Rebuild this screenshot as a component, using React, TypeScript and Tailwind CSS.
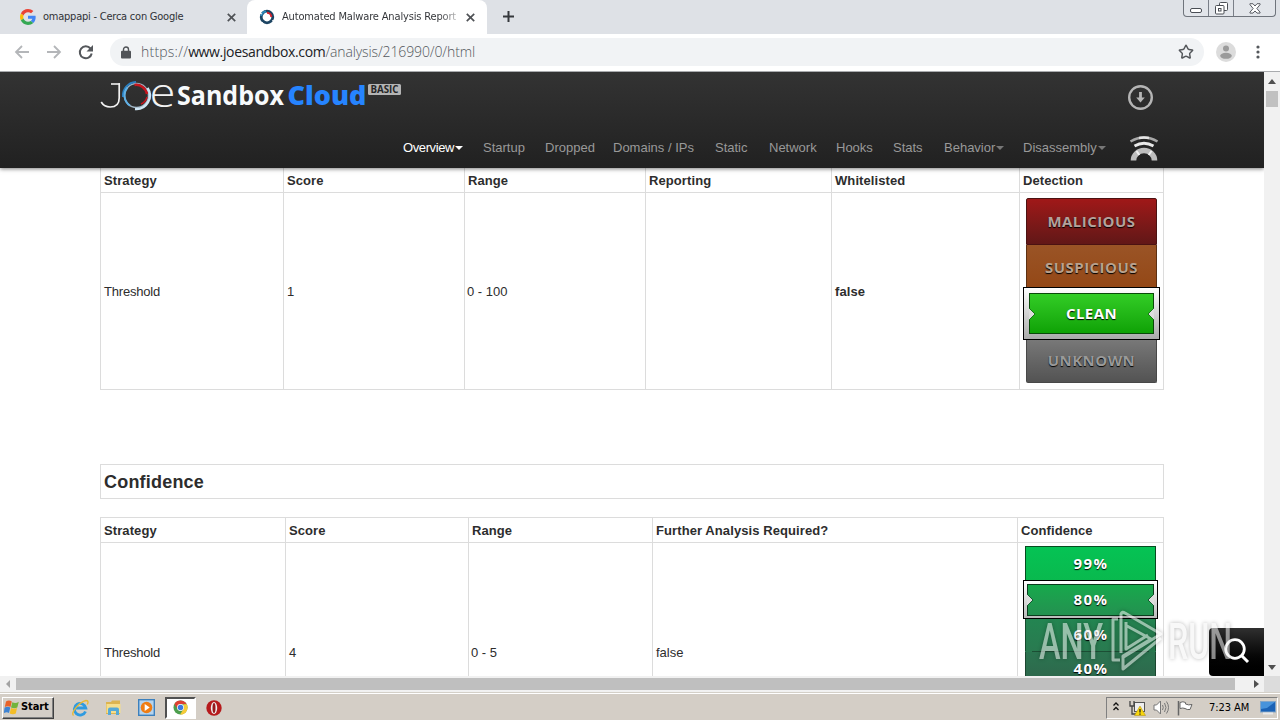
import type { ReactNode } from 'react';
import { clsx } from 'clsx';
import { Star } from 'lucide-react';

const navItems = [
  { label: 'Overview', width: 'w-[80px]', caret: true, active: true },
  { label: 'Startup', width: 'w-[62px]' },
  { label: 'Dropped', width: 'w-[68px]' },
  { label: 'Domains / IPs', width: 'w-[102px]' },
  { label: 'Static', width: 'w-[54px]' },
  { label: 'Network', width: 'w-[67px]' },
  { label: 'Hooks', width: 'w-[57px]' },
  { label: 'Stats', width: 'w-[51px]' },
  { label: 'Behavior', width: 'w-[79px]', caret: true },
  { label: 'Disassembly', width: 'w-[107px]', caret: true },
];

function GoogleIcon() {
  return (
    <svg width="16" height="16" viewBox="0 0 48 48">
      <path fill="#EA4335" d="M24 9.5c3.500 0 6.700 1.200 9.200 3.600l6.900-6.900C35.900 2.400 30.500 0 24 0 14.600 0 6.500 5.400 2.600 13.200l8 6.200C12.400 13.700 17.700 9.500 24 9.500z" />
      <path fill="#4285F4" d="M47 24.600c0-1.600-.2-3.100-.4-4.600H24v9h12.900c-.6 3-2.300 5.500-4.800 7.200l7.700 6C44.400 38 47 32 47 24.600z" />
      <path fill="#FBBC05" d="M10.500 28.600c-.5-1.500-.8-3-.8-4.600s.3-3.100.8-4.600l-8-6.200C.9 16.500 0 20.100 0 24s.9 7.500 2.600 10.800l7.900-6.200z" />
      <path fill="#34A853" d="M24 48c6.500 0 11.900-2.100 15.900-5.800l-7.700-6c-2.200 1.500-4.900 2.300-8.200 2.300-6.300 0-11.600-4.200-13.500-9.900l-8 6.200C6.500 42.600 14.600 48 24 48z" />
    </svg>
  );
}

function JoeIcon() {
  return (
    <svg width="16" height="16" viewBox="0 0 16 16" fill="none">
      <circle cx="8" cy="8" r="5.800" stroke="#1d4563" strokeWidth="2.800" />
      <path d="M2.200 7A6 6 0 0 1 7 2.200" stroke="#2b86b8" strokeWidth="2" />
      <path d="M8 3.800A4.300 4.300 0 0 1 12.300 8" stroke="#d6222c" strokeWidth="2" />
      <path d="M13 12l2-1M3 13l1 2M1 4l2 1" stroke="#fff" strokeWidth="1" />
    </svg>
  );
}

function CloseX() {
  return (
    <svg width="9" height="9" viewBox="0 0 8 8">
      <path d="M.7.7l6.600 6.600M7.300.7L.7 7.300" stroke="#4f5256" strokeWidth="1.500" />
    </svg>
  );
}

function TabStrip() {
  return (
    <div className="flex h-[34px] items-stretch bg-[#dee1e6] font-['DejaVu_Sans_Condensed','DejaVu_Sans',sans-serif] text-[11px] text-[#303236]">
      <div className="flex w-[247px] items-center pl-5">
        <GoogleIcon />
        <span className="ml-[7px] w-[184px] whitespace-nowrap pt-px tracking-[-0.23px]">omappapi - Cerca con Google</span>
        <CloseX />
      </div>
      <div className="flex w-[240px] items-center rounded-t-lg bg-white pl-3">
        <JoeIcon />
        <span className="ml-[7px] w-[174px] overflow-hidden whitespace-nowrap bg-gradient-to-r from-[#303236] from-90% to-[#bbb] bg-clip-text pt-px tracking-[-0.16px] text-transparent">
          Automated Malware Analysis Report
        </span>
        <span className="ml-[10px]"><CloseX /></span>
      </div>
      <svg className="ml-[15px] mt-[10px]" width="13" height="13" viewBox="0 0 13 13">
        <path d="M6.500 1v11M1 6.500h11" stroke="#35383c" strokeWidth="2" />
      </svg>
      <div className="ml-auto mr-[4px] flex h-[17px] w-[93px] divide-x divide-[#7a7f88] rounded-b border border-t-0 border-[#6f747c] bg-[#e2e5ea]">
        <div className="flex w-[25px] items-end justify-center pb-[3px]">
          <div className="h-[5px] w-[12px] rounded-[2px] border border-[#4a4e55] bg-white" />
        </div>
        <div className="flex w-[25px] items-center justify-center">
          <svg width="13" height="13" viewBox="0 0 13 13" fill="#fff" stroke="#4a4e55">
            <rect x="4.500" y=".5" width="8" height="8" rx="1" />
            <rect x=".5" y="3.500" width="8.500" height="8.500" rx="1" />
            <rect x="3.500" y="6.500" width="2.500" height="2.500" />
          </svg>
        </div>
        <div className="flex flex-1 items-center justify-center">
          <svg width="12" height="11" viewBox="0 0 13 12" fill="#fff" stroke="#4a4e55" strokeWidth="1">
            <path d="M1 .8h3.300l2.200 2.500L8.700.8H12v1L8.500 6l3.500 4v1H8.700L6.500 8.700 4.300 11H1v-1l3.500-4L1 1.800z" />
          </svg>
        </div>
      </div>
    </div>
  );
}

function Toolbar() {
  return (
    <div className="flex h-[38px] items-center border-b border-[#a9abae] bg-white pb-px">
      <svg className="ml-[14px]" width="82" height="18" viewBox="0 0 82 18" fill="none" strokeWidth="1.800">
        <path d="M15 9H2M8 3L2 9l6 6" stroke="#b4b6b9" />
        <path d="M33 9h13M40 3l6 6-6 6" stroke="#b4b6b9" />
        <path d="M76.500 5.500A6 6 0 1 0 77.700 10.500" stroke="#55585c" strokeWidth="2" />
        <path d="M79 2v6.500h-6.500z" fill="#55585c" />
      </svg>
      <div className="ml-[14px] flex h-[28px] w-[1094px] items-center rounded-full bg-[#f1f3f5] pl-[11px]">
        <svg width="10" height="13" viewBox="0 0 10 13">
          <path d="M2.500 6V3.500a2.500 2.500 0 0 1 5 0V6" fill="none" stroke="#505357" strokeWidth="1.400" />
          <rect x="0" y="4.800" width="10" height="7.700" rx="1" fill="#505357" />
        </svg>
        <span className="ml-[10px] whitespace-nowrap font-['Open_Sans',sans-serif] text-[14px] font-light leading-5 text-[#54585d]">
          <span className="tracking-[0.22px]">https://</span>
          <span className="font-normal tracking-[-0.36px] text-[#202124]">www.joesandbox.com</span>
          <span className="tracking-[-0.12px]">/analysis/216990/0/html</span>
        </span>
        <Star className="ml-auto mr-[10px] h-4 w-4 text-[#55585c]" strokeWidth={2.200} />
      </div>
      <svg className="ml-[12px]" width="20" height="20" viewBox="0 0 20 20">
        <circle cx="10" cy="10" r="10" fill="#dcdcdc" />
        <circle cx="10" cy="6.500" r="3" fill="#9b9b9b" />
        <ellipse cx="10" cy="13.800" rx="5.800" ry="3" fill="#9b9b9b" />
      </svg>
      <svg className="ml-[20px]" width="4" height="14" viewBox="0 0 4 14" fill="#55585c">
        <circle cx="2" cy="2" r="1.600" />
        <circle cx="2" cy="7" r="1.600" />
        <circle cx="2" cy="12" r="1.600" />
      </svg>
    </div>
  );
}

function Logo() {
  return (
    <svg width="310" height="40" viewBox="0 0 310 40" fill="none" fontFamily="'Open Sans', sans-serif">
      <path d="M11 12h9" stroke="#f2f2f2" strokeWidth="1.600" />
      <path d="M19.200 11.200v14.800q0 9-9 9-6 0-9-5" stroke="#f2f2f2" strokeWidth="1.700" />
      <circle cx="36.500" cy="23.500" r="12" stroke="#9fb4c4" strokeWidth="1.500" />
      <path d="M23 25A13.500 13.500 0 0 1 36 10" stroke="#2a7fc0" strokeWidth="2" />
      <path d="M30 33.500A12 12 0 0 1 27.500 15.500" stroke="#5fb0e6" strokeWidth="2" />
      <path d="M34.500 13A11 11 0 0 1 47 22" stroke="#c5161f" strokeWidth="2.500" />
      <path d="M47.500 16A13.500 13.500 0 0 1 35 37" stroke="#cfe6f4" strokeWidth="2.500" />
      <path d="M47 25A10.500 10.500 0 0 1 41 32" stroke="#c5161f" strokeWidth="1.500" />
      <text x="49.500" y="35" fontSize="41" fontWeight="300" textLength="26" lengthAdjust="spacingAndGlyphs" fill="#f2f2f2">e</text>
      <text x="77" y="33" fontSize="27" fontWeight="700" textLength="107" lengthAdjust="spacingAndGlyphs" fill="#f7fafc">Sandbox</text>
      <text x="187.500" y="33" fontSize="27" fontWeight="800" textLength="79" lengthAdjust="spacingAndGlyphs" fill="#2684ff">Cloud</text>
      <rect x="268" y="12" width="33" height="11" rx="1.500" fill="#b4b4b4" />
      <text x="270.500" y="21.200" fontSize="10" fontWeight="700" textLength="28" lengthAdjust="spacingAndGlyphs" fill="#262626">BASIC</text>
    </svg>
  );
}

function Header() {
  return (
    <header className="relative z-10 flex h-[96px] flex-none flex-col bg-gradient-to-b from-[#333] to-[#212121] shadow-[0_1px_4px_rgba(0,0,0,0.5)]">
      <div className="flex h-[56px] pl-[100px]">
        <Logo />
        <svg className="ml-auto mr-[111px] mt-[13px]" width="25" height="25" viewBox="0 0 25 25" fill="none" stroke="#b5b5b5">
          <circle cx="12.500" cy="12.500" r="11.300" strokeWidth="2.400" />
          <path d="M12.500 7v7" strokeWidth="2.800" />
          <path d="M8.200 12.500h8.600l-4.300 5z" fill="#b5b5b5" stroke="none" />
        </svg>
      </div>
      <nav className="flex h-[39px] items-center pl-[403px] text-[13px] text-[#999]">
        {navItems.map(({ label, width, caret, active }) => (
          <a key={label} className={clsx('flex flex-none items-center whitespace-nowrap', width, active && 'tracking-[-0.4px] text-white')}>
            {label}
            {caret && (
              <svg className="ml-px mt-px" width="8" height="4" viewBox="0 0 8 4">
                <path d="M0 0h8L4 4z" fill={active ? '#fff' : '#777'} />
              </svg>
            )}
          </a>
        ))}
        {/* stacked arcs */}
        <svg className="-ml-px mt-px" width="30" height="26" viewBox="0 0 30 26" fill="none">
          <path d="M1.500 6.500Q15-1.500 28.500 6.500" stroke="#a9a9a9" strokeWidth="2.600" />
          <path d="M10 3Q15 2 20 3" stroke="#e5e5e5" strokeWidth="2.400" />
          <path d="M5.500 11Q15 5.500 24.500 11" stroke="#e9e9e9" strokeWidth="2.800" />
          <path d="M4.500 25.500a10.500 10 0 0 1 21 0" stroke="#bdbdbd" strokeWidth="5.600" />
          <path d="M7.500 16l2.800 4M22.500 16l-2.800 4" stroke="#f1f1f1" strokeWidth="2" />
        </svg>
      </nav>
    </header>
  );
}

function Cell({ children, bold, className }: { children?: ReactNode; bold?: boolean; className?: string }) {
  return (
    <div className={clsx('flex border-b border-l border-[#dcdcdc] pl-[3px]', bold && 'font-bold tracking-[0.09px]', className ?? 'items-center pt-[2px]')}>
      {children}
    </div>
  );
}

const badgeLabel = "flex items-center justify-center font-['Open_Sans',sans-serif] font-bold";

function Notches({ stroke, top }: { stroke: string; top: string }) {
  return (
    <>
      <svg className={clsx('absolute -left-px', top)} width="7" height="14" viewBox="0 0 7 14">
        <path d="M0 1l6 6-6 6z" fill="#ddd" />
        <path d="M0 1l6 6-6 6" fill="none" stroke={stroke} />
      </svg>
      <svg className={clsx('absolute -right-px', top)} width="7" height="14" viewBox="0 0 7 14">
        <path d="M7 1L1 7l6 6z" fill="#ddd" />
        <path d="M7 1L1 7l6 6" fill="none" stroke={stroke} />
      </svg>
    </>
  );
}

function DetectionBadge() {
  return (
    <div className="ml-[3px] mt-[5px] flex w-[131px] flex-col text-[15px] tracking-[0.45px] [text-shadow:0_1px_1px_#000]">
      <div className={clsx(badgeLabel, 'h-[47px] rounded-t-[2px] border border-[#4b1212] bg-gradient-to-b from-[#a01818] to-[#611717] text-[#b4a29c]')}>MALICIOUS</div>
      <div className={clsx(badgeLabel, 'h-[42px] border-x border-[#5c3012] bg-gradient-to-b from-[#9a5426] to-[#944816] pt-[3px] text-[#b9a28e]')}>SUSPICIOUS</div>
      <div className="-mx-[3px] h-[53px] border border-black bg-gradient-to-b from-white to-[#aaa] px-[5px] pt-[5px]">
        <div className={clsx(badgeLabel, 'relative h-[41px] border border-[#084a08] bg-gradient-to-b from-[#32cd25] to-[#0ea205] text-white')}>
          CLEAN
          <Notches stroke="#187818" top="top-[13px]" />
        </div>
      </div>
      <div className={clsx(badgeLabel, 'h-[43px] rounded-b-[2px] border border-t-0 border-[#484848] bg-gradient-to-b from-[#787878] to-[#535353] pb-px text-[#999]')}>UNKNOWN</div>
    </div>
  );
}

function ConfidenceBadge() {
  return (
    <div className="ml-[4px] mt-[3px] flex w-[131px] flex-col text-[15px] tracking-[1.400px] text-white [text-shadow:0_1px_1px_#000]">
      <div className={clsx(badgeLabel, 'h-[34px] border border-b-0 border-[#064c20] bg-gradient-to-b from-[#05c354] to-[#09b94e] pl-px')}>99%</div>
      <div className="-mx-[2px] h-[39px] border border-black bg-gradient-to-b from-white to-[#bbb] p-[3px]">
        <div className={clsx(badgeLabel, 'relative h-[32px] border border-[#0a3d1d] bg-gradient-to-b from-[#16a94c] to-[#239150] pb-[2px] pl-px')}>
          80%
          <Notches stroke="#145c30" top="top-[8px]" />
        </div>
      </div>
      <div className={clsx(badgeLabel, 'h-[32px] border-x border-[#174b2e] bg-gradient-to-b from-[#238551] to-[#297a50] pb-[2px] pl-px')}>60%</div>
      <div className="h-px bg-[#297a50] px-[7px]"><div className="h-px bg-[#1c4f35]" /></div>
      <div className={clsx(badgeLabel, 'h-[34px] border-x border-[#1c4630] bg-gradient-to-b from-[#2b7450] to-[#2e654b] pb-[2px] pl-px')}>40%</div>
    </div>
  );
}

function Page() {
  return (
    <main className="relative flex h-[604px] w-[1264px] flex-col overflow-hidden bg-white font-['Liberation_Sans',Arial,sans-serif] text-[13px] text-[#2d2d2d]">
      <Header />
      <div className="ml-[100px] grid w-[1064px] flex-none grid-cols-[183px_181px_181px_186px_188px_144px] grid-rows-[25px_197px] border-r border-[#dcdcdc]">
        {['Strategy', 'Score', 'Range', 'Reporting', 'Whitelisted', 'Detection'].map((h) => (
          <Cell key={h} bold>{h}</Cell>
        ))}
        <Cell><span className="tracking-[-0.2px]">Threshold</span></Cell>
        <Cell>1</Cell>
        <Cell><span className="-ml-px">0 - 100</span></Cell>
        <Cell />
        <Cell bold>false</Cell>
        <Cell className="items-start"><DetectionBadge /></Cell>
      </div>

      <h2 className="ml-[100px] mt-[74px] flex h-[35px] w-[1064px] flex-none items-center border border-[#dcdcdc] pl-[3px] pt-[2px] text-[18px] font-bold tracking-[0.2px]">
        Confidence
      </h2>

      <div className="ml-[100px] mt-[18px] grid w-[1064px] flex-none grid-cols-[185px_183px_184px_365px_146px] grid-rows-[25px_218px] border-r border-t border-[#dcdcdc]">
        {['Strategy', 'Score', 'Range', 'Further Analysis Required?', 'Confidence'].map((h) => (
          <Cell key={h} bold>{h}</Cell>
        ))}
        <Cell><span className="tracking-[-0.2px]">Threshold</span></Cell>
        <Cell>4</Cell>
        <Cell><span className="-ml-px">0 - 5</span></Cell>
        <Cell>false</Cell>
        <Cell className="items-start"><ConfidenceBadge /></Cell>
      </div>

      <button className="absolute bottom-0 right-0 flex h-[48px] w-[55px] items-center justify-center rounded-l bg-gradient-to-b from-[#303030] to-black">
        <svg className="-mt-1" width="27" height="27" viewBox="0 0 27 27" fill="none" stroke="#fff" strokeWidth="2.800">
          <circle cx="12" cy="12" r="9.300" />
          <path d="M18 18l7 7" strokeWidth="3" />
        </svg>
      </button>
    </main>
  );
}

function Watermark() {
  return (
    <svg className="pointer-events-none absolute left-[1030px] top-[600px] z-20 opacity-55 drop-shadow-[0_0_2px_rgba(0,0,0,0.5)]" width="220" height="80" viewBox="0 0 220 80" fill="none" fontFamily="Roboto, sans-serif">
      <text x="9" y="59" fontSize="50" fontWeight="500" textLength="64" lengthAdjust="spacingAndGlyphs" fill="#f4f4f4">ANY</text>
      <text x="138" y="59" fontSize="50" fontWeight="500" textLength="64" lengthAdjust="spacingAndGlyphs" fill="#f4f4f4">RUN</text>
      <path d="M88 19h-5v41h7M91 53V14q1-3 4-1l36 21-39 24M96 22v27l22-14M97 26l24 13-28 17v13l38-31" stroke="#f4f4f4" strokeWidth="3" strokeLinejoin="round" />
    </svg>
  );
}

function VerticalScroll() {
  return (
    <div className="flex h-[604px] w-4 flex-col items-center bg-[#f1f1f1] pb-[6px] pt-[7px]">
      <svg width="8" height="5" viewBox="0 0 8 5"><path d="M0 5l4-5 4 5z" fill="#505050" /></svg>
      <div className="mt-[7px] h-[16px] w-[12px] bg-[#c1c1c1]" />
      <svg className="mt-auto" width="8" height="5" viewBox="0 0 8 5"><path d="M0 0h8L4 5z" fill="#505050" /></svg>
    </div>
  );
}

function HorizontalScroll() {
  return (
    <div className="flex h-4 items-center bg-[#f1f1f1]">
      <svg className="ml-[6px]" width="4" height="8" viewBox="0 0 4 8"><path d="M4 0v8L0 4z" fill="#a3a3a3" /></svg>
      <div className="ml-[6px] h-[12px] w-[1219px] bg-[#bfbfbf]" />
      <svg className="ml-[19px]" width="5" height="8" viewBox="0 0 5 8"><path d="M0 0v8l5-4z" fill="#505050" /></svg>
      <div className="ml-auto h-4 w-4 bg-[#dcdcdc]" />
    </div>
  );
}

function Taskbar() {
  return (
    <footer className="flex h-[28px] items-center border-t border-[#d4d0c8] bg-[#d4cec6] pt-[2px] font-['DejaVu_Sans_Condensed','DejaVu_Sans',sans-serif] text-[11px] text-black shadow-[inset_0_1px_0_#fff]">
      <button className="ml-[2px] flex h-[22px] w-[52px] items-center border border-b-[#404040] border-l-white border-r-[#404040] border-t-white pl-px font-bold tracking-[-0.1px] shadow-[inset_-1px_-1px_0_#808080]">
        <svg className="mr-[2px] flex-none" width="15" height="15" viewBox="0 0 15 15">
          <path d="M2 1.500Q5-.5 7.800 1.500L6.500 7Q4 5.500.8 7z" fill="#e8632a" />
          <path d="M8.300 2.200Q11.500 4 14.800 1.800L13.300 7.500Q10.500 9 7 7.500z" fill="#72b43c" />
          <path d="M.6 7.500Q4 6 6.300 7.500L5 13Q3 11.500-.2 13z" fill="#3e83d2" />
          <path d="M7 8Q10 9.500 13 8L11.800 13.500Q9 15 5.700 13.500z" fill="#f3bd26" />
        </svg>
        Start
      </button>
      <svg className="ml-[17px]" width="18" height="18" viewBox="0 0 18 18" fill="none">
        <path d="M14.500 12.500A5.800 5.800 0 1 1 14.800 9H5" stroke="#2f9be0" strokeWidth="2.800" />
        <path d="M2.500 16.500C-.5 14 8 3 15 1.500c3 0 2 2.500 1.300 4" stroke="#e9b932" strokeWidth="1.400" />
      </svg>
      <svg className="ml-[16px]" width="17" height="17" viewBox="0 0 17 17">
        <path d="M1 3h5l1-1.500h8V15H1z" fill="#dcb450" />
        <path d="M1.500 5h14v9h-14z" fill="#f5de8c" />
        <path d="M3 10.500q0-2 2-2h7q2 0 2 2V16h-3v-4H6v4H3z" fill="#55a9d6" />
      </svg>
      <svg className="ml-[16px]" width="17" height="17" viewBox="0 0 17 17">
        <rect x=".7" y=".7" width="15.600" height="15.600" fill="#b5d4ee" stroke="#3c80bd" strokeWidth="1.400" />
        <circle cx="8.500" cy="8.500" r="5.800" fill="#ef7d14" />
        <path d="M6.700 5l5 3.500-5 3.500z" fill="#fff" />
      </svg>
      <div className="ml-[10px] flex h-[22px] w-[31px] items-center justify-center border-2 border-b-white border-l-[#505050] border-r-white border-t-[#505050] bg-white">
        <svg width="15" height="15" viewBox="0 0 16 16">
          <circle cx="8" cy="8" r="7.500" fill="#4c9e4d" />
          <path d="M1.500 4.200A7.500 7.500 0 0 1 14.500 4.300H8L5 9.500z" fill="#df4032" />
          <path d="M14.700 4.600A7.500 7.500 0 0 1 7.500 15.500L11.300 9.500 11 4.600z" fill="#f7cb38" />
          <circle cx="8" cy="8" r="3.700" fill="#fff" />
          <circle cx="8" cy="8" r="2.900" fill="#3b79df" />
        </svg>
      </div>
      <svg className="ml-[10px]" width="16" height="16" viewBox="0 0 16 16">
        <circle cx="8" cy="8" r="7.700" fill="#b61a1c" />
        <ellipse cx="8" cy="8" rx="3.200" ry="6" fill="#eee" />
        <ellipse cx="8" cy="8" rx="1.500" ry="5" fill="#96181b" />
      </svg>

      <div className="ml-auto mr-[2px] flex h-[22px] w-[172px] items-center border border-b-white border-l-[#808080] border-r-white border-t-[#808080] pl-[6px]">
        <svg className="-mt-[3px]" width="6" height="9" viewBox="0 0 6 9" fill="none" stroke="#111" strokeWidth="1.300">
          <path d="M.5 3.500L3 1l2.500 2.500M.5 8L3 5.500 5.500 8" />
        </svg>
        <svg className="ml-[10px]" width="17" height="16" viewBox="0 0 17 16">
          <rect x="5.500" y="2.500" width="10" height="9" fill="#eee" stroke="#555" />
          <path d="M1 1v5h4V1M3 6v8h4" fill="none" stroke="#444" strokeWidth="1.300" />
          <path d="M11 6l5.500 9.500h-11z" fill="#f8d60d" stroke="#b18c06" strokeWidth=".5" />
          <path d="M11 9v3.500M11 13.500v1.200" stroke="#222" strokeWidth="1.300" />
        </svg>
        <svg className="ml-[7px]" width="17" height="15" viewBox="0 0 17 15" fill="none" stroke="#777">
          <path d="M1 5h2.500L7.500 1v13l-4-4H1z" fill="#fff" />
          <path d="M9.500 5q1.500 2.500 0 5M11.500 3q3 4.500 0 9M13.500 1.500q4 6 0 12" />
        </svg>
        <svg className="ml-[7px]" width="17" height="16" viewBox="0 0 17 16" fill="#fff" stroke="#666">
          <path d="M1.500 1v14.500" strokeWidth="1.500" />
          <path d="M3 2.500q3-1.500 5.500 0v1.500q3 1.500 6.500.5l-2 5q-3 .5-5-1-2-1-5 0z" />
        </svg>
        <span className="ml-[15px] w-[44px] whitespace-nowrap pt-px tracking-[-0.05px]">7:23 AM</span>
        <svg className="ml-[7px] flex-none" width="16" height="15" viewBox="0 0 16 15">
          <rect x=".5" y="1.500" width="15" height="10.500" fill="#1b62b5" stroke="#81a5c8" />
          <path d="M1 2h14L7 8 1 9z" fill="#4793db" />
          <path d="M3 13.500h10" stroke="#e9e9e9" strokeWidth="2" />
        </svg>
      </div>
    </footer>
  );
}

export default function App() {
  return (
    <div className="relative flex h-[720px] w-[1280px] flex-col overflow-hidden bg-white">
      <TabStrip />
      <Toolbar />
      <div className="flex h-[604px]">
        <Page />
        <VerticalScroll />
      </div>
      <HorizontalScroll />
      <Taskbar />
      <Watermark />
    </div>
  );
}
